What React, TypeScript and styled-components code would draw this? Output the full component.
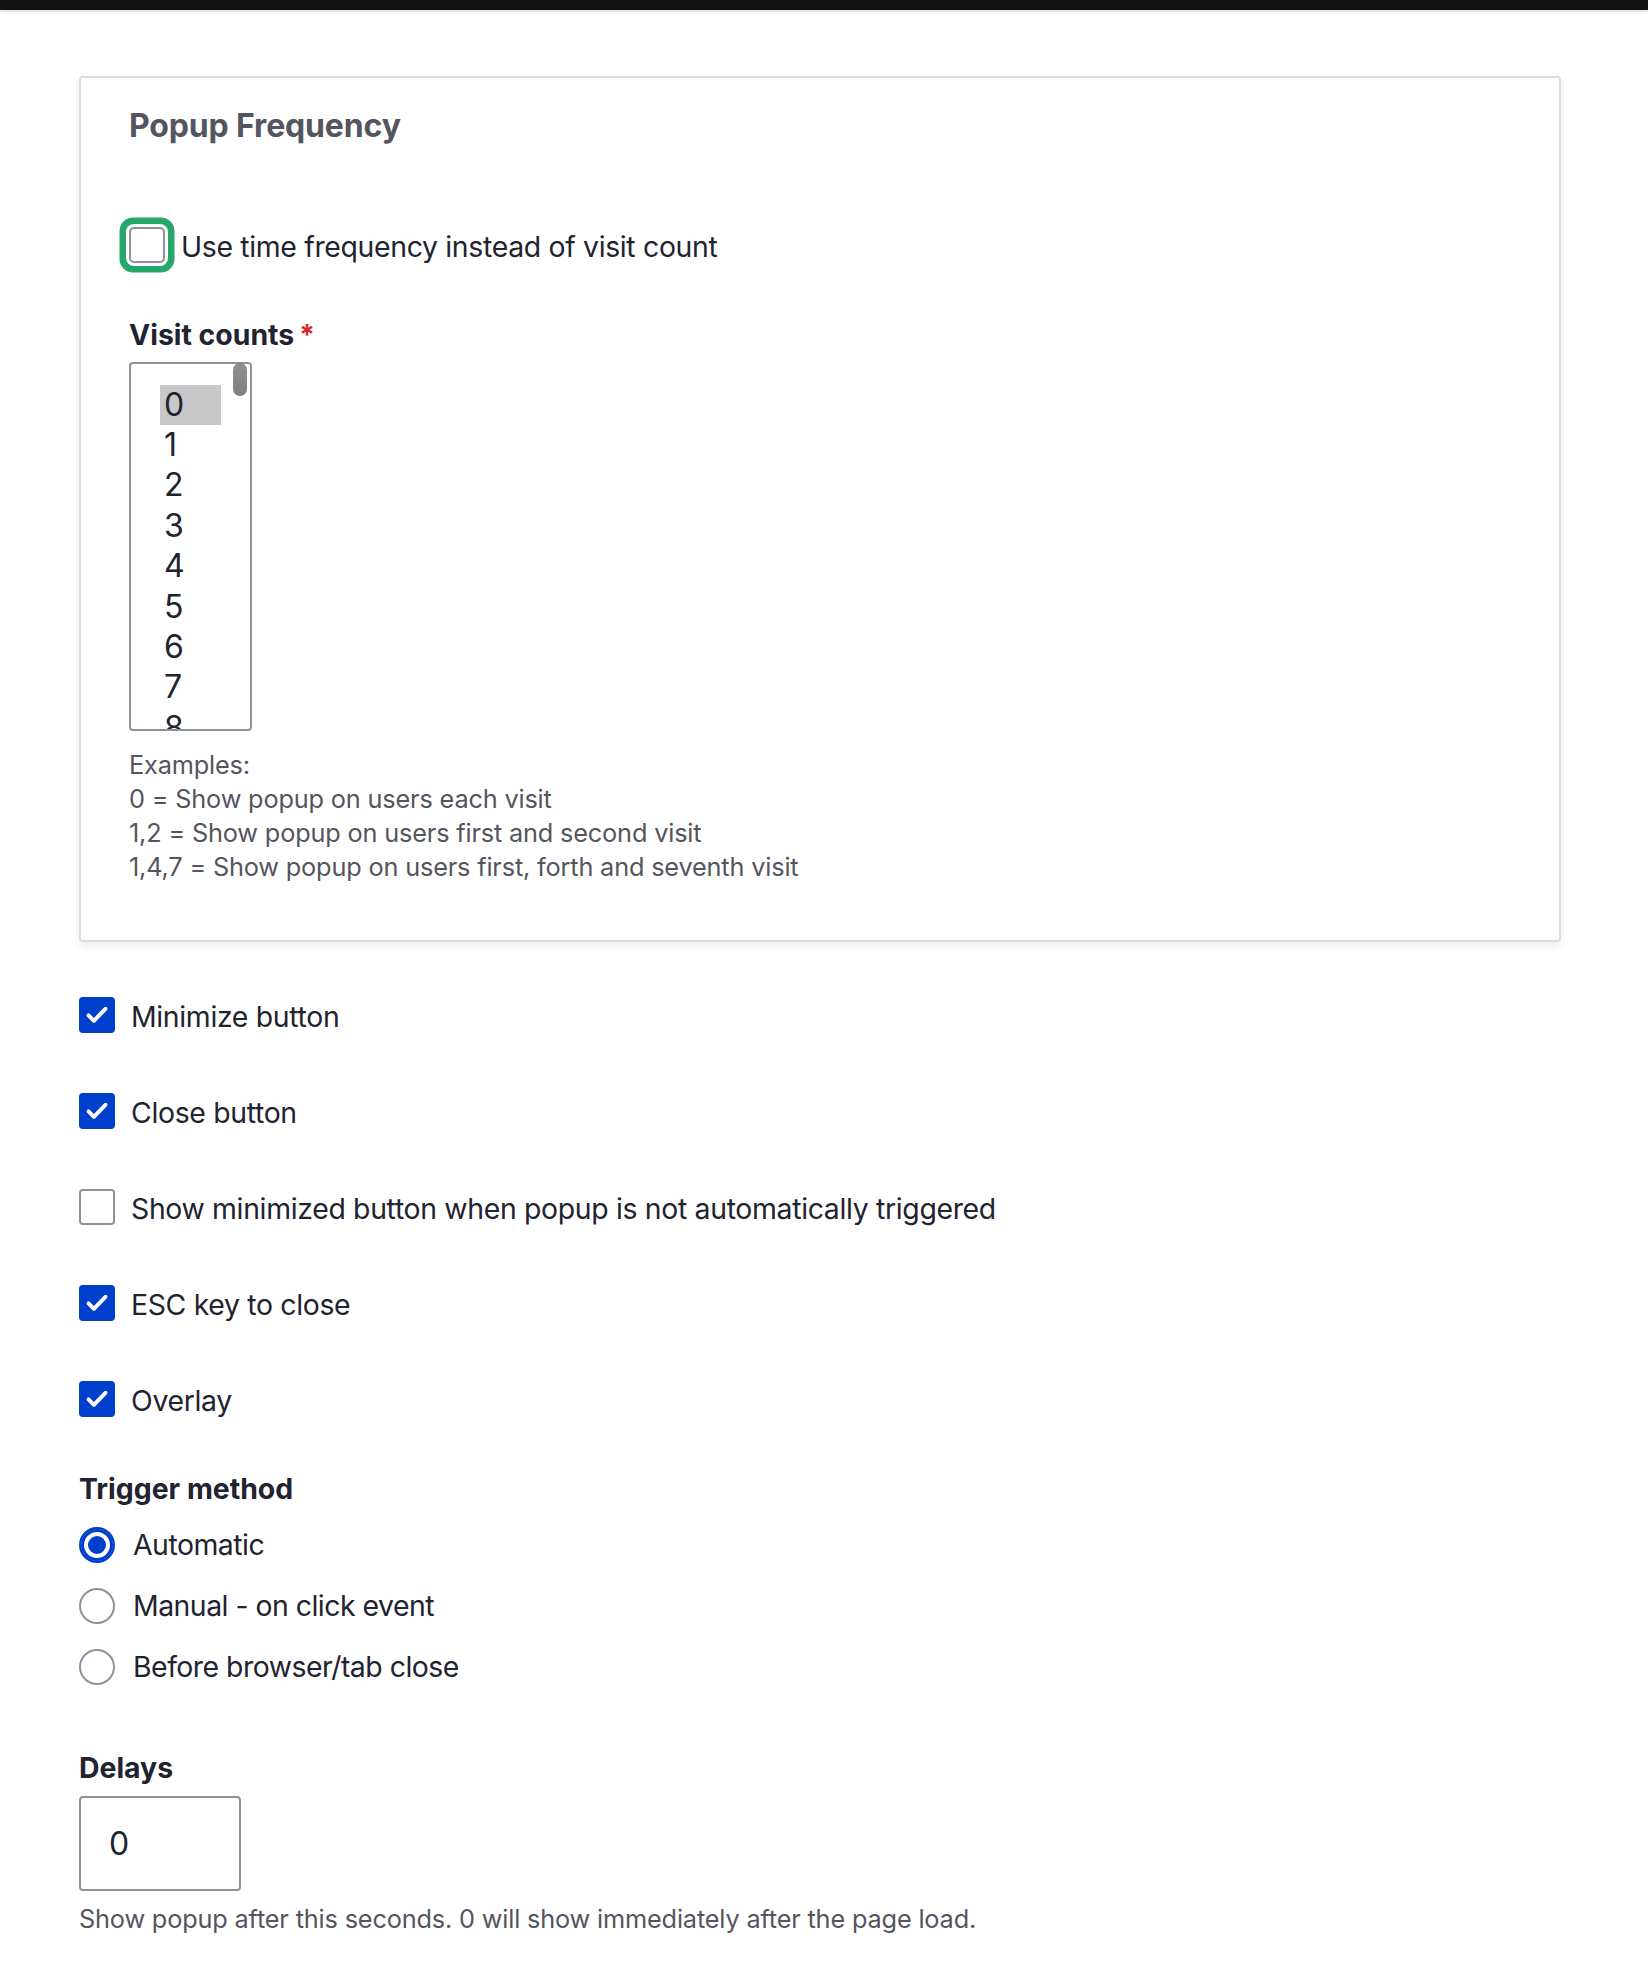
import React from "react";
import styled, { createGlobalStyle, css } from "styled-components";

const GlobalStyle = createGlobalStyle`
  html, body {
    margin: 0;
    padding: 0;
    background: #ffffff;
  }
  body {
    font-family: Inter, "Noto Sans", "Liberation Sans", sans-serif;
    color: #222330;
    -webkit-font-smoothing: antialiased;
  }
  * { box-sizing: border-box; }
`;

const TopBar = styled.div`
  height: 10px;
  background: #121212;
  box-shadow: 0 2px 3px rgba(0, 0, 0, 0.12);
`;

const Page = styled.main`
  padding: 66px 87px 40px 79px;
`;

const Card = styled.section`
  border: 2px solid #dcdde3;
  border-radius: 4px;
  box-shadow: 0 4px 8px rgba(0, 0, 0, 0.07);
  padding: 28px 48px 56px 48px;
  background: #fff;
`;

const CardTitle = styled.h2`
  margin: 0;
  font-size: 32px;
  line-height: 40px;
  font-weight: 700;
  letter-spacing: -0.15px;
  color: #545560;
`;

const FieldLabel = styled.div<{ $mt: number }>`
  margin-top: ${(p) => p.$mt}px;
  font-size: 28.4px;
  line-height: 36px;
  font-weight: 700;
  color: #222330;
  display: flex;
  align-items: flex-start;
`;

const Required = styled.span`
  color: #dc2323;
  margin-left: 5px;
  font-size: 28px;
  line-height: 36px;
`;

const CheckRow = styled.label<{ $mt?: number }>`
  display: flex;
  align-items: flex-start;
  gap: 16px;
  margin-top: ${(p) => p.$mt ?? 0}px;
  cursor: pointer;
`;

const Box = styled.span<{ $checked?: boolean; $focused?: boolean }>`
  flex: none;
  width: 36px;
  height: 36px;
  border-radius: 4px;
  border: 2px solid #8e929c;
  background: #fff;
  display: flex;
  align-items: center;
  justify-content: center;
  ${(p) =>
    p.$checked &&
    css`
      border-color: #003ecc;
      background: #003ecc;
    `}
  ${(p) =>
    p.$focused &&
    css`
      box-shadow: 0 0 0 3px #ffffff, 0 0 0 9.5px #26a769;
      border-radius: 5px;
    `}
`;

const OptionText = styled.span`
  font-size: 28.4px;
  line-height: 36px;
  padding-top: 2px;
  letter-spacing: -0.33px;
  color: #222330;
`;

const ListBox = styled.div`
  position: relative;
  margin-top: 9px;
  width: 123px;
  height: 369px;
  border: 2px solid #8e929c;
  border-radius: 4px;
  overflow: hidden;
  padding: 21px 0 0 29px;
  background: #fff;
`;

const ListOption = styled.div<{ $selected?: boolean }>`
  width: 61px;
  height: 40.4px;
  font-size: 32px;
  line-height: 40.4px;
  padding-left: 4px;
  color: #222330;
  background: ${(p) => (p.$selected ? "#c8c8c8" : "transparent")};
`;

const ScrollThumb = styled.div`
  position: absolute;
  top: -0.5px;
  right: 3px;
  width: 14px;
  height: 33px;
  border-radius: 7px;
  background: linear-gradient(#8f8f8f, #7f7f7f);
`;

const Description = styled.div<{ $mt: number }>`
  margin-top: ${(p) => p.$mt}px;
  font-size: 25.3px;
  line-height: 34px;
  letter-spacing: -0.17px;
  color: #545560;
`;

const CheckList = styled.div`
  margin-top: 55px;
  display: flex;
  flex-direction: column;
  gap: 58px;
`;

const RadioList = styled.div`
  margin-top: 19.5px;
  display: flex;
  flex-direction: column;
  gap: 24px;
`;

const RadioRow = styled.label`
  display: flex;
  align-items: flex-start;
  gap: 18px;
  cursor: pointer;
`;

const RadioDot = styled.span<{ $checked?: boolean }>`
  flex: none;
  width: 36px;
  height: 36px;
  border-radius: 50%;
  border: 2px solid #8e929c;
  background: #fff;
  margin-top: 0.5px;
  ${(p) =>
    p.$checked &&
    css`
      border-color: #003ecc;
      background: #003ecc;
      box-shadow: inset 0 0 0 3px #003ecc, inset 0 0 0 7px #ffffff;
    `}
`;

const RadioText = styled.span`
  font-size: 28.4px;
  line-height: 36px;
  padding-top: 1px;
  letter-spacing: -0.5px;
  color: #222330;
`;

const NumberInput = styled.input`
  display: block;
  margin-top: 10px;
  width: 162px;
  height: 95px;
  border: 2px solid #8e929c;
  border-radius: 4px;
  padding: 0 28px;
  font-family: Inter, "Noto Sans", "Liberation Sans", sans-serif;
  font-size: 32px;
  color: #222330;
  background: #fff;
  outline: none;
`;

const Check = () => (
  <svg width="36" height="36" viewBox="0 0 36 36" aria-hidden="true">
    <polyline
      points="8.5,18.5 14.5,24.5 27.5,11"
      fill="none"
      stroke="#ffffff"
      strokeWidth="4.4"
      strokeLinecap="round"
      strokeLinejoin="round"
    />
  </svg>
);

const checkboxes = [
  { label: "Minimize button", checked: true },
  { label: "Close button", checked: true },
  { label: "Show minimized button when popup is not automatically triggered", checked: false },
  { label: "ESC key to close", checked: true },
  { label: "Overlay", checked: true },
];

const radios = [
  { label: "Automatic", checked: true },
  { label: "Manual - on click event", checked: false },
  { label: "Before browser/tab close", checked: false },
];

const visitCounts = [0, 1, 2, 3, 4, 5, 6, 7, 8];

export default function App() {
  return (
    <>
      <GlobalStyle />
      <TopBar />
      <Page>
        <Card>
          <CardTitle>Popup Frequency</CardTitle>
          <CheckRow $mt={81}>
            <Box $focused />
            <OptionText>Use time frequency instead of visit count</OptionText>
          </CheckRow>
          <FieldLabel $mt={51.7}>
            Visit counts<Required>*</Required>
          </FieldLabel>
          <ListBox>
            {visitCounts.map((n) => (
              <ListOption key={n} $selected={n === 0}>
                {n}
              </ListOption>
            ))}
            <ScrollThumb />
          </ListBox>
          <Description $mt={17}>
            Examples:
            <br />0 = Show popup on users each visit
            <br />1,2 = Show popup on users first and second visit
            <br />1,4,7 = Show popup on users first, forth and seventh visit
          </Description>
        </Card>

        <CheckList>
          {checkboxes.map((c) => (
            <CheckRow key={c.label}>
              <Box $checked={c.checked}>{c.checked && <Check />}</Box>
              <OptionText>{c.label}</OptionText>
            </CheckRow>
          ))}
        </CheckList>

        <FieldLabel $mt={52}>Trigger method</FieldLabel>
        <RadioList>
          {radios.map((r) => (
            <RadioRow key={r.label}>
              <RadioDot $checked={r.checked} />
              <RadioText>{r.label}</RadioText>
            </RadioRow>
          ))}
        </RadioList>

        <FieldLabel $mt={64.5}>Delays</FieldLabel>
        <NumberInput type="text" readOnly value="0" />
        <Description $mt={11.5}>
          Show popup after this seconds. 0 will show immediately after the page load.
        </Description>
      </Page>
    </>
  );
}
